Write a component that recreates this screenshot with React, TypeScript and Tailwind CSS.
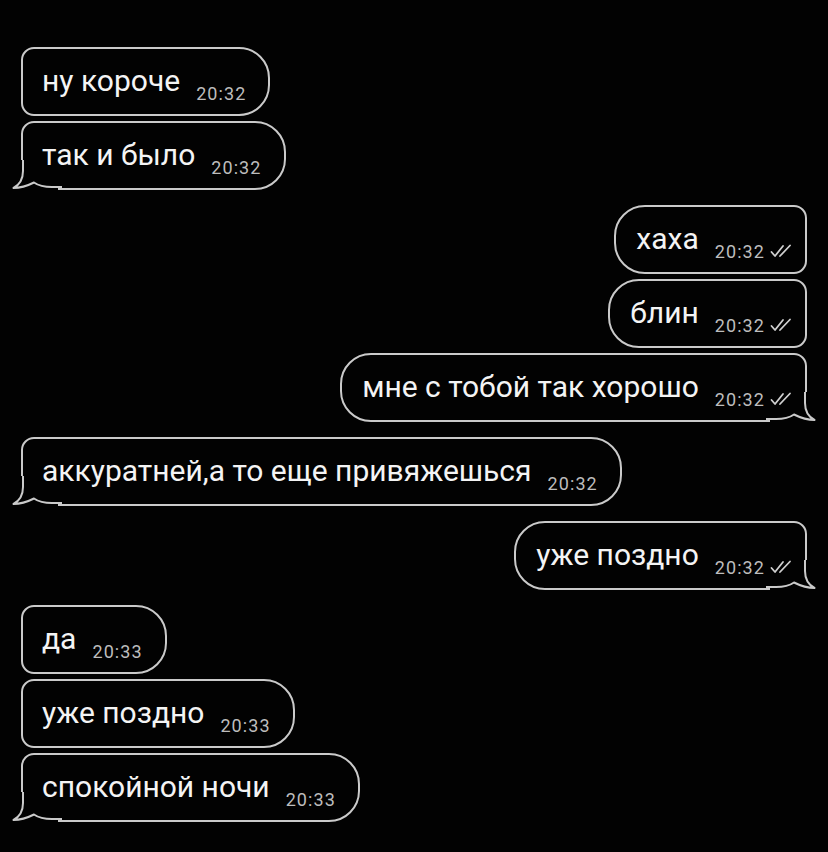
import React from 'react';

type Msg = { text: string; time: string; out?: boolean; tail?: boolean; gap?: boolean };

const messages: Msg[] = [
  { text: 'ну короче', time: '20:32' },
  { text: 'так и было', time: '20:32', tail: true },
  { text: 'хаха', time: '20:32', out: true, gap: true },
  { text: 'блин', time: '20:32', out: true },
  { text: 'мне с тобой так хорошо', time: '20:32', out: true, tail: true },
  { text: 'аккуратней,а то еще привяжешься', time: '20:32', tail: true, gap: true },
  { text: 'уже поздно', time: '20:32', out: true, tail: true, gap: true },
  { text: 'да', time: '20:33', gap: true },
  { text: 'уже поздно', time: '20:33' },
  { text: 'спокойной ночи', time: '20:33', tail: true },
];

// tail drawn over the bottom corner of the bubble
function Tail({ out }: { out?: boolean }) {
  const d = 'M11 0 L11 11 C11 19 7 25 1.5 28 C9 28 16 25.5 22 22.5 C27 26 32 27 40 27 L50 27';
  return (
    <svg
      width="50"
      height="30"
      viewBox="0 0 50 30"
      className={out ? 'absolute bottom-[-2px] right-[-11px]' : 'absolute bottom-[-2px] left-[-11px]'}
    >
      <g transform={out ? 'translate(50 0) scale(-1 1)' : undefined}>
        <rect x="0" y="0" width="46" height="30" fill="#020202" />
        <path d={d} fill="none" stroke="#cacaca" strokeWidth="2" strokeLinejoin="round" />
      </g>
    </svg>
  );
}

function Checks() {
  return (
    <svg width="22" height="14" viewBox="0 0 22 14" className="ml-[5px] inline-block align-[-9px]">
      <path d="M1.5 8 L5 12 L13 2" fill="none" stroke="#d0d0d0" strokeWidth="1.8" strokeLinecap="round" strokeLinejoin="round" />
      <path d="M10 12 L20 1.5" fill="none" stroke="#d0d0d0" strokeWidth="1.8" strokeLinecap="round" />
    </svg>
  );
}

function Bubble({ m }: { m: Msg }) {
  return (
    <div
      className={`relative flex h-[69px] items-center border-2 border-[#cacaca] bg-[#020202] ${
        m.out ? 'rounded-l-[31px] rounded-r-[13px] pl-[20px] pr-[13px]' : 'rounded-l-[13px] rounded-r-[31px] pl-[19px] pr-[22px]'
      }`}
    >
      {m.tail && <Tail out={m.out} />}
      <p className="relative top-[3px] whitespace-nowrap leading-none">
        <span className="text-[30px] text-[#f4f4f4]">{m.text}</span>
        <span className="ml-4 align-[-9px] text-[18px] tracking-[0.06em] text-[#bdbdbd]">{m.time}</span>
        {m.out && <Checks />}
      </p>
    </div>
  );
}

export default function App() {
  return (
    <div className="min-h-[852px] w-[828px] bg-[#020202] px-[21px] pt-[47px] pb-8 font-['Roboto','Liberation_Sans',sans-serif]">
      <div className="flex flex-col gap-[5px]">
        {messages.map((m, i) => (
          <div key={i} className={`flex ${m.out ? 'justify-end' : 'justify-start'} ${m.gap ? 'mt-[10px]' : ''}`}>
            <Bubble m={m} />
          </div>
        ))}
      </div>
    </div>
  );
}
